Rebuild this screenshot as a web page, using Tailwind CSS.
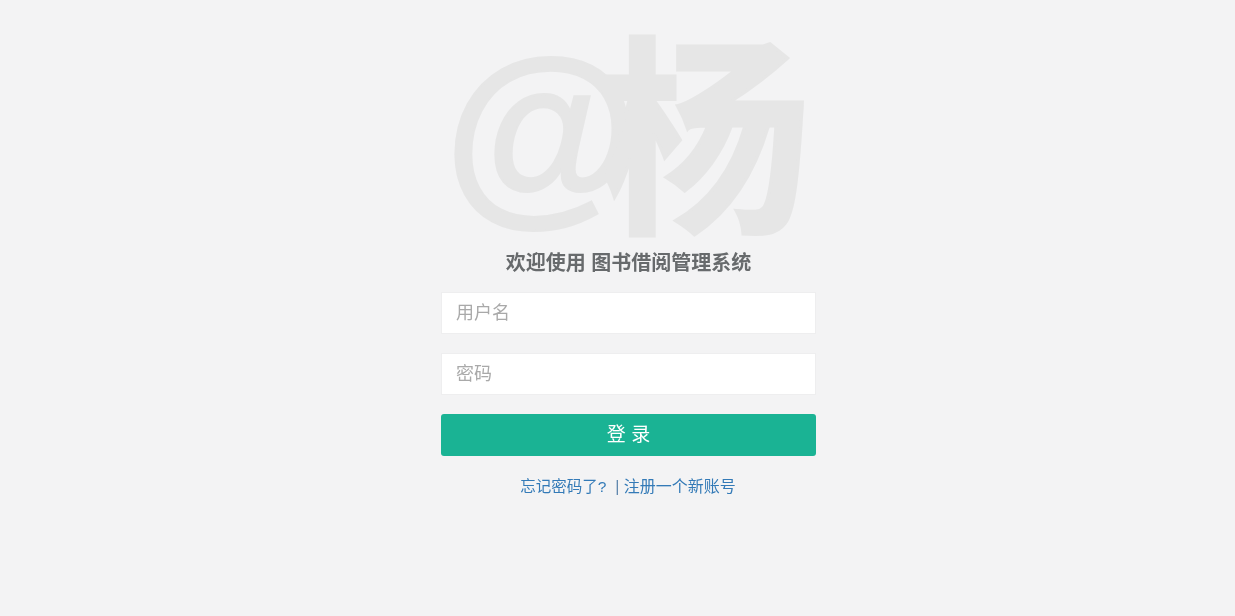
<!DOCTYPE html>
<html lang="zh-CN">
<head>
  <meta charset="UTF-8">
  <title>登录</title>
  <script src="https://cdn.jsdelivr.net/npm/@tailwindcss/browser@4"></script>
</head>
<body class="bg-[#f3f3f4] h-[616px] overflow-hidden font-['Liberation_Sans','Noto_Sans_CJK_SC',sans-serif] text-[#676a6c]">
  <div class="w-[375px] ml-[441px] flex flex-col items-center text-center blur-[0.5px]">
    <h1 class="h-[240px] w-[500px] -ml-[44px] text-[212px] leading-[288px] font-bold text-[#e6e6e6] tracking-[-41px] whitespace-nowrap [-webkit-text-stroke:3px_#e6e6e6]"><span class="text-[200px] leading-[0] align-[18px] [-webkit-text-stroke:2px_#e6e6e6]">@</span>杨</h1>
    <h3 class="mt-[11px] text-[20px] leading-[24px] font-bold text-[#676a6c]">欢迎使用 图书借阅管理系统</h3>
    <form class="w-full mt-[17px] flex flex-col">
      <input class="h-[42px] px-[14px] bg-white border border-[#eeeeef] text-[18px] placeholder:text-[#a9a9a9] outline-none" placeholder="用户名">
      <input class="h-[42px] mt-[19px] px-[14px] bg-white border border-[#eeeeef] text-[18px] placeholder:text-[#a9a9a9] outline-none" placeholder="密码" type="password">
      <button type="button" class="h-[42px] mt-[19px] bg-[#1ab394] rounded-[3px] text-white text-[19px]">登 录</button>
    </form>
    <p class="mt-[19px] -ml-[1px] text-[16px] leading-[24px] text-[#5f87ad]"><a class="text-[15.5px] text-[#337ab7]" href="#">忘记密码了?</a>&nbsp; | <a class="text-[#337ab7]" href="#">注册一个新账号</a></p>
  </div>
</body>
</html>
